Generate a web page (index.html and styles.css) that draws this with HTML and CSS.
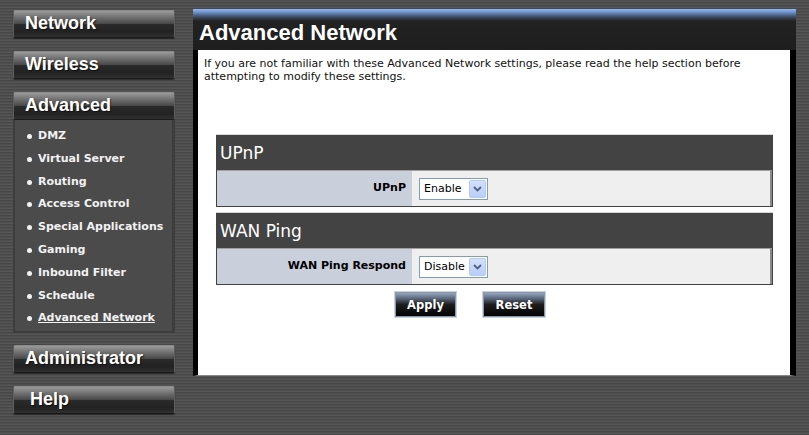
FILE: index.html
```html
<!DOCTYPE html>
<html lang="en">
<head>
  <meta charset="UTF-8">
  <title>Advanced Network</title>
  <link rel="stylesheet" href="styles.css">
</head>
<body>
  <div class="page">
    <!-- 左侧菜单 -->
    <div class="sidebar">
      <div class="nav-btn">Network</div>
      <div class="nav-btn">Wireless</div>
      <div class="nav-btn nav-open">Advanced</div>
      <ul class="sub-menu">
        <li>DMZ</li>
        <li>Virtual Server</li>
        <li>Routing</li>
        <li>Access Control</li>
        <li>Special Applications</li>
        <li>Gaming</li>
        <li>Inbound Filter</li>
        <li>Schedule</li>
        <li class="current">Advanced Network</li>
      </ul>
      <div class="nav-btn">Administrator</div>
      <div class="nav-btn nav-help">Help</div>
    </div>

    <!-- 主内容 -->
    <div class="main">
      <div class="main-title">
        <h1>Advanced Network</h1>
      </div>
      <div class="main-body">
        <p class="intro">If you are not familiar with these Advanced Network settings, please read the help section before attempting to modify these settings.</p>

        <div class="section">
          <div class="section-head">UPnP</div>
          <div class="section-row">
            <div class="row-label">UPnP</div>
            <div class="row-value">
              <div class="select-box">
                <span class="select-text">Enable</span>
                <span class="select-arrow"><svg width="9" height="6" viewBox="0 0 9 6"><path d="M1 1 L4.5 4.5 L8 1" fill="none" stroke="#4d6185" stroke-width="1.8"/></svg></span>
              </div>
            </div>
          </div>
        </div>

        <div class="section">
          <div class="section-head">WAN Ping</div>
          <div class="section-row">
            <div class="row-label">WAN Ping Respond</div>
            <div class="row-value">
              <div class="select-box">
                <span class="select-text">Disable</span>
                <span class="select-arrow"><svg width="9" height="6" viewBox="0 0 9 6"><path d="M1 1 L4.5 4.5 L8 1" fill="none" stroke="#4d6185" stroke-width="1.8"/></svg></span>
              </div>
            </div>
          </div>
        </div>

        <div class="button-row">
          <button class="btn-dark">Apply</button>
          <button class="btn-dark btn-reset">Reset</button>
        </div>
      </div>
    </div>
  </div>
</body>
</html>
```

FILE: styles.css
```css
/* 基础样式 */
* {
  box-sizing: border-box;
  margin: 0;
  padding: 0;
}

body {
  font-family: 'Liberation Sans', Arial, sans-serif;
  font-size: 11px;
  color: #000;
  height: 435px;
  overflow: hidden;
  background-color: #4c4c4c;
  background-image: repeating-linear-gradient(to bottom, #4f4f4f 0, #4f4f4f 1px, #555 1px, #555 2px, #474747 2px, #474747 3px);
}

.page {
  display: flex;
  padding-top: 9px;
}

/* 左侧菜单 */
.sidebar {
  width: 162px;
  margin-left: 13px;
  margin-top: 1px;
}

.nav-btn {
  height: 28px;
  margin-bottom: 13px;
  padding-left: 11px;
  border: 1px solid #5f5f5f;
  border-top-color: #8a8a8a;
  border-bottom-color: #1a1a1a;
  border-radius: 2px;
  background: linear-gradient(to bottom, #9a9a9a 0, #6f6f6f 25%, #4a4a4a 48%, #2a2a2a 52%, #222 80%, #303030 100%);
  box-shadow: 0 1px 1px rgba(0, 0, 0, 0.5);
  color: #fff;
  font-size: 18px;
  font-weight: bold;
  line-height: 25px;
  text-shadow: 1px 1px 1px rgba(0, 0, 0, 0.6);
}

.nav-btn.nav-open {
  margin-bottom: 0;
}

.nav-btn.nav-help {
  padding-left: 16px;
}

.sub-menu {
  list-style: none;
  height: 213px;
  margin-bottom: 12px;
  padding: 5px 0 0 11px;
  background-color: #4b4b4b;
  border-left: 2px solid #3d3d3d;
  border-right: 3px solid #3d3d3d;
  border-bottom: 2px solid #3d3d3d;
}

.sub-menu li {
  position: relative;
  padding-left: 12px;
  font-family: 'DejaVu Sans', Verdana, sans-serif;
  font-size: 11px;
  font-weight: bold;
  line-height: 22.8px;
  color: #f2f2f2;
}

.sub-menu li::before {
  content: '';
  position: absolute;
  left: 1px;
  top: 9px;
  width: 5px;
  height: 5px;
  border-radius: 50%;
  background-color: #f2f2f2;
}

.sub-menu li.current {
  text-decoration: underline;
}

/* 主内容 */
.main {
  width: 603px;
  margin-left: 18px;
}

.main-title {
  height: 41px;
  padding-left: 6px;
  background: linear-gradient(to bottom, #94b8f0 0, #6f95d0 3px, #3c4a60 8px, #222 12px, #1e1e1e 100%);
}

.main-title h1 {
  font-size: 22px;
  font-weight: bold;
  color: #fff;
  line-height: 40px;
  padding-top: 4px;
}

.main-body {
  height: 326px;
  background-color: #fff;
  border-left: 5px solid #000;
  border-right: 6px solid #000;
  border-bottom: 1px solid #888;
  padding: 7px 17px 0 18px;
}

.intro {
  margin-left: -12px;
  font-family: 'DejaVu Sans', Verdana, sans-serif;
  font-size: 11px;
  line-height: 13px;
  color: #111;
  margin-bottom: 52px;
}

/* 设置区块 */
.section {
  border: 1px solid #424242;
  margin-bottom: 6px;
  box-shadow: 0 -1px 0 #d8d8d8;
}

.section-head {
  height: 34px;
  padding-left: 3px;
  background-color: #434343;
  color: #fff;
  font-family: 'DejaVu Sans', Verdana, sans-serif;
  font-size: 17px;
  line-height: 34px;
}

.section-row {
  display: flex;
  height: 36px;
  border-top: 1px solid #a0a0a0;
  border-right: 2px solid #8a8a8a;
  background-color: #efefef;
}

.row-label {
  width: 195px;
  padding-right: 6px;
  background-color: #c9cfdb;
  text-align: right;
  font-family: 'DejaVu Sans', Verdana, sans-serif;
  font-size: 11px;
  font-weight: bold;
  line-height: 34px;
}

.row-value {
  display: flex;
  align-items: center;
  padding-left: 7px;
}

.select-box {
  display: flex;
  align-items: center;
  justify-content: space-between;
  width: 69px;
  height: 22px;
  padding: 1px 1px 1px 4px;
  border: 1px solid #7f9db9;
  background-color: #fff;
  font-family: 'DejaVu Sans', Verdana, sans-serif;
  font-size: 11px;
}

.select-arrow {
  display: flex;
  align-items: center;
  justify-content: center;
  width: 17px;
  height: 18px;
  border: 1px solid #b7c9f2;
  border-radius: 2px;
  background: linear-gradient(to bottom, #d3e0fd, #b9cdf7);
}

/* 按钮 */
.button-row {
  display: flex;
  gap: 25px;
  padding-left: 178px;
}

.btn-dark {
  width: 63px;
  height: 27px;
  border: 1px solid #c9d3e0;
  outline: 1px solid #8a98aa;
  outline-offset: -2px;
  background: linear-gradient(to bottom, #9fb0c8 0, #5d6b80 25%, #1e1e1e 50%, #000 100%);
  color: #fff;
  font-family: 'DejaVu Sans', Verdana, sans-serif;
  font-size: 11.5px;
  font-weight: bold;
  cursor: pointer;
}

.btn-reset {
  width: 64px;
}
```
